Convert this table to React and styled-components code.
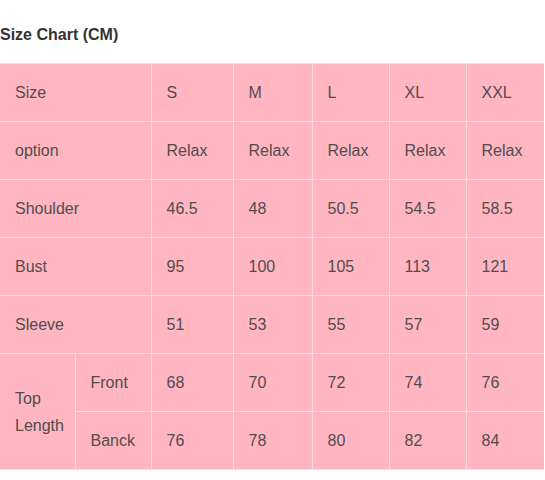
import React from "react";
import styled, { createGlobalStyle } from "styled-components";

const Global = createGlobalStyle`
  html, body { margin: 0; padding: 0; background: #fff; }
  body { font-family: "Liberation Sans", Arial, sans-serif; }
`;

const Page = styled.div`
  display: flex;
  flex-direction: column;
  width: 545px;
  overflow: hidden;
`;

const Intro = styled.p`
  margin: -17px 0 0 0;
  font-size: 14px;
  line-height: 18px;
  color: #333;
  white-space: nowrap;
`;

const Title = styled.h3`
  margin: 22px 0 16px 0;
  font-size: 16px;
  line-height: 24px;
  font-weight: bold;
  color: #333;
`;

const Table = styled.table`
  border-collapse: collapse;
  table-layout: fixed;
  width: 544px;
  background: #ffb6c1;
  font-size: 16px;
  color: #524c4e;
`;

const Col = styled.col`
  width: ${(p) => p.$w}px;
`;

const Cell = styled.td`
  height: 57px;
  padding: 0 0 0 15px;
  border: 1px solid #f4dde1;
  vertical-align: middle;
  line-height: 27px;
  text-align: left;
  ${(p) => p.$first && "border-left: none;"}
  ${(p) => p.$last && "border-right: none;"}
`;

const colWidths = [75, 76, 82, 79, 77, 77, 78];
const sizes = ["S", "M", "L", "XL", "XXL"];
const rows = [
  ["option", ["Relax", "Relax", "Relax", "Relax", "Relax"]],
  ["Shoulder", ["46.5", "48", "50.5", "54.5", "58.5"]],
  ["Bust", ["95", "100", "105", "113", "121"]],
  ["Sleeve", ["51", "53", "55", "57", "59"]],
];

function Values({ vals }) {
  return vals.map((v, i) => (
    <Cell key={i} $last={i === vals.length - 1}>{v}</Cell>
  ));
}

export default function App() {
  return (
    <Page>
      <Global />
      <Intro>Size may vary 1-2cm as measured by hand, thank you.</Intro>
      <Title>Size Chart (CM)</Title>
      <Table>
        <colgroup>
          {colWidths.map((w, i) => (
            <Col key={i} $w={w} />
          ))}
        </colgroup>
        <tbody>
          <tr>
            <Cell colSpan={2} $first>Size</Cell>
            <Values vals={sizes} />
          </tr>
          {rows.map(([label, vals]) => (
            <tr key={label}>
              <Cell colSpan={2} $first>{label}</Cell>
              <Values vals={vals} />
            </tr>
          ))}
          <tr>
            <Cell rowSpan={2} $first>Top Length</Cell>
            <Cell>Front</Cell>
            <Values vals={["68", "70", "72", "74", "76"]} />
          </tr>
          <tr>
            <Cell>Banck</Cell>
            <Values vals={["76", "78", "80", "82", "84"]} />
          </tr>
        </tbody>
      </Table>
    </Page>
  );
}
